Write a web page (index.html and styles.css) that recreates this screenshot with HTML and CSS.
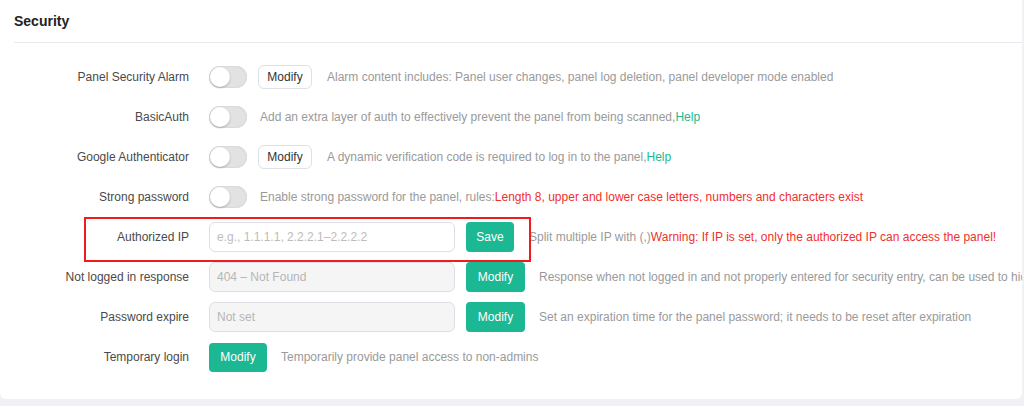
FILE: index.html
```html
<!DOCTYPE html>
<html>
<head>
<meta charset="utf-8">
<link rel="stylesheet" href="styles.css">
</head>
<body>
<div class="page">
  <section class="card">
    <div class="card-head">Security</div>
    <div class="form">
      <div class="row">
        <div class="label">Panel Security Alarm</div>
        <div class="ctrl">
          <span class="switch"><span class="knob"></span></span>
          <button class="btn-outline">Modify</button>
          <span class="desc">Alarm content includes: Panel user changes, panel log deletion, panel developer mode enabled</span>
        </div>
      </div>
      <div class="row">
        <div class="label">BasicAuth</div>
        <div class="ctrl">
          <span class="switch"><span class="knob"></span></span>
          <span class="desc">Add an extra layer of auth to effectively prevent the panel from being scanned,<a class="help">Help</a></span>
        </div>
      </div>
      <div class="row">
        <div class="label">Google Authenticator</div>
        <div class="ctrl">
          <span class="switch"><span class="knob"></span></span>
          <button class="btn-outline">Modify</button>
          <span class="desc">A dynamic verification code is required to log in to the panel,<a class="help">Help</a></span>
        </div>
      </div>
      <div class="row">
        <div class="label">Strong password</div>
        <div class="ctrl">
          <span class="switch"><span class="knob"></span></span>
          <span class="desc">Enable strong password for the panel, rules:<span class="warn">Length 8, upper and lower case letters, numbers and characters exist</span></span>
        </div>
      </div>
      <div class="row row-marked">
        <div class="label">Authorized IP</div>
        <div class="ctrl">
          <input class="input" type="text" placeholder="e.g., 1.1.1.1, 2.2.2.1–2.2.2.2">
          <button class="btn-green btn-save">Save</button>
          <span class="desc">Split multiple IP with (,)<span class="warn">Warning: If IP is set, only the authorized IP can access the panel!</span></span>
        </div>
      </div>
      <div class="row">
        <div class="label">Not logged in response</div>
        <div class="ctrl">
          <input class="input input-disabled" type="text" value="404 – Not Found" readonly>
          <button class="btn-green">Modify</button>
          <span class="desc">Response when not logged in and not properly entered for security entry, can be used to hide the panel feature</span>
        </div>
      </div>
      <div class="row">
        <div class="label">Password expire</div>
        <div class="ctrl">
          <input class="input input-disabled" type="text" value="Not set" readonly>
          <button class="btn-green">Modify</button>
          <span class="desc">Set an expiration time for the panel password; it needs to be reset after expiration</span>
        </div>
      </div>
      <div class="row">
        <div class="label">Temporary login</div>
        <div class="ctrl">
          <button class="btn-green btn-temp">Modify</button>
          <span class="desc">Temporarily provide panel access to non-admins</span>
        </div>
      </div>
    </div>
  </section>
</div>
</body>
</html>
```

FILE: styles.css
```css
* { box-sizing: border-box; }

html, body {
  margin: 0;
  padding: 0;
}

body {
  background: #f0f1f5;
  font-family: "Liberation Sans", Arial, sans-serif;
  width: 1024px;
  height: 406px;
  overflow: hidden;
}

.page {
  padding: 0 2px 7px 0;
}

.card {
  background: #ffffff;
  border-radius: 0 0 6px 6px;
  height: 399px;
  overflow: hidden;
}

.card-head {
  margin-left: 14px;
  height: 43px;
  padding-top: 12px;
  border-bottom: 1px solid #e9e9ef;
  font-size: 14px;
  font-weight: bold;
  color: #222;
  line-height: 18px;
}

.form {
  padding-top: 14px;
  display: flex;
  flex-direction: column;
}

.row {
  display: flex;
  align-items: center;
  height: 40px;
  gap: 20px;
  position: relative;
}

.row-marked::after {
  content: "";
  position: absolute;
  left: 84px;
  top: 0;
  width: 443px;
  height: 41px;
  border: 2px solid #ee1c1c;
  pointer-events: none;
}

.label {
  width: 189px;
  flex: none;
  text-align: right;
  font-size: 12px;
  color: #4a4a4a;
  white-space: nowrap;
}

.ctrl {
  display: flex;
  align-items: center;
  white-space: nowrap;
}

.switch {
  width: 38px;
  height: 22px;
  border-radius: 11px;
  background: #e2e2e2;
  position: relative;
  flex: none;
  margin-right: 13px;
  box-shadow: inset 0 0 0 1px #dadada;
}

.knob {
  position: absolute;
  left: 1px;
  top: 1px;
  width: 20px;
  height: 20px;
  border-radius: 50%;
  background: #fff;
  box-shadow: 0 1px 2px rgba(0, 0, 0, 0.25);
}

.switch + .btn-outline {
  margin-left: -2px;
}

.btn-outline {
  height: 24px;
  width: 54px;
  padding: 0;
  border: 1px solid #dfe1e8;
  border-radius: 6px;
  background: #fff;
  color: #333;
  font-family: inherit;
  font-size: 12px;
  margin-right: 15px;
  flex: none;
}

.desc {
  font-size: 12px;
  color: #9a9a9a;
}

.help {
  color: #20b98f;
}

.warn {
  color: #f0302b;
}

.input {
  width: 246px;
  height: 30px;
  border: 1px solid #dcdfe6;
  border-radius: 6px;
  padding: 0 7px;
  font-family: inherit;
  font-size: 12px;
  color: #aaa;
  background: #fff;
  outline: none;
  flex: none;
  margin-right: 11px;
}

.input::placeholder {
  color: #bcbcbc;
}

.input-disabled {
  background: #f5f5f5;
  color: #b5b5b5;
}

.btn-green {
  height: 30px;
  width: 59px;
  border: none;
  border-radius: 4px;
  background: #1cb893;
  color: #fff;
  font-family: inherit;
  font-size: 12px;
  margin-right: 14px;
  flex: none;
  padding: 0;
}

.btn-save {
  width: 48px;
  margin-right: 15px;
}

.btn-temp {
  width: 58px;
  height: 29px;
}
```
